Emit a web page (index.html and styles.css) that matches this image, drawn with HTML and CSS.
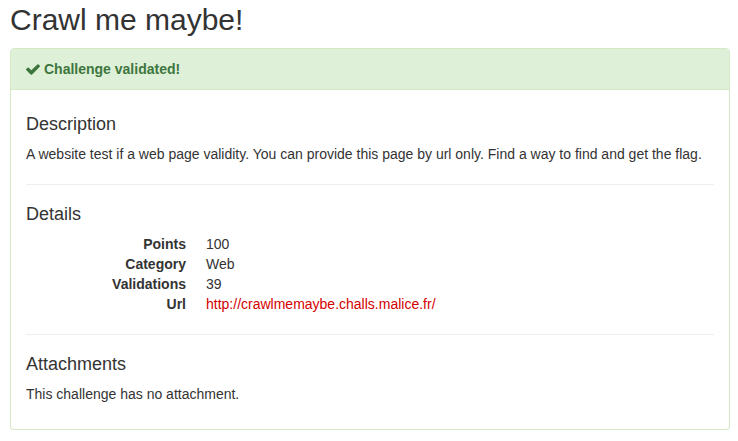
FILE: index.html
```html
<!DOCTYPE html>
<html>
<head>
<meta charset="utf-8">
<link rel="stylesheet" href="styles.css">
</head>
<body>
<div class="page">
  <h2 class="title">Crawl me maybe!</h2>
  <div class="panel">
    <div class="panel-heading">
      <svg class="check" viewBox="0 0 1550 1188" width="14" height="11" aria-hidden="true"><path fill="currentColor" d="M1550 232q0 40-28 68l-724 724-136 136q-28 28-68 28t-68-28l-136-136-362-362q-28-28-28-68t28-68l136-136q28-28 68-28t68 28l294 295 656-657q28-28 68-28t68 28l136 136q28 28 28 68z"/></svg>
      <span>Challenge validated!</span>
    </div>
    <div class="panel-body">
      <h4>Description</h4>
      <p>A website test if a web page validity. You can provide this page by url only. Find a way to find and get the flag.</p>
      <hr>
      <h4>Details</h4>
      <dl class="details">
        <dt>Points</dt><dd>100</dd>
        <dt>Category</dt><dd>Web</dd>
        <dt>Validations</dt><dd>39</dd>
        <dt>Url</dt><dd><a href="#">http://crawlmemaybe.challs.malice.fr/</a></dd>
      </dl>
      <hr>
      <h4>Attachments</h4>
      <p>This challenge has no attachment.</p>
    </div>
  </div>
</div>
</body>
</html>
```
FILE: styles.css
```css
* { box-sizing: border-box; }
html, body { margin: 0; padding: 0; background: #fff; }
body {
  font-family: "Liberation Sans", Arial, Helvetica, sans-serif;
  font-size: 14px;
  line-height: 20px;
  color: #333;
}
.page {
  width: 730px;
  padding-left: 10px;
}
.title {
  font-size: 30px;
  font-weight: 400;
  line-height: 33px;
  margin: 3px 0 12px;
  color: #333;
}
.panel {
  border: 1px solid #d6e9c6;
  border-radius: 4px;
  box-shadow: 0 1px 1px rgba(0,0,0,.05);
  background: #fff;
}
.panel-heading {
  background: #dff0d8;
  color: #3c763d;
  padding: 10px 15px;
  border-bottom: 1px solid #d6e9c6;
  border-radius: 3px 3px 0 0;
  font-weight: 700;
  display: flex;
  align-items: center;
  gap: 4px;
}
.check { display: block; }
.panel-body {
  padding: 15px;
  display: flow-root;
}
h4 {
  font-size: 18px;
  font-weight: 400;
  line-height: 19px;
  margin: 10px 0;
}
p { margin: 0 0 10px; }
hr {
  border: 0;
  border-top: 1px solid #eee;
  margin: 20px 0;
  height: 0;
}
.details {
  display: grid;
  grid-template-columns: 160px 1fr;
  column-gap: 20px;
  margin: 0 0 20px;
}
.details dt {
  font-weight: 700;
  text-align: right;
}
.details dd { margin: 0; }
.details a {
  color: #d40000;
  text-decoration: none;
}
```
